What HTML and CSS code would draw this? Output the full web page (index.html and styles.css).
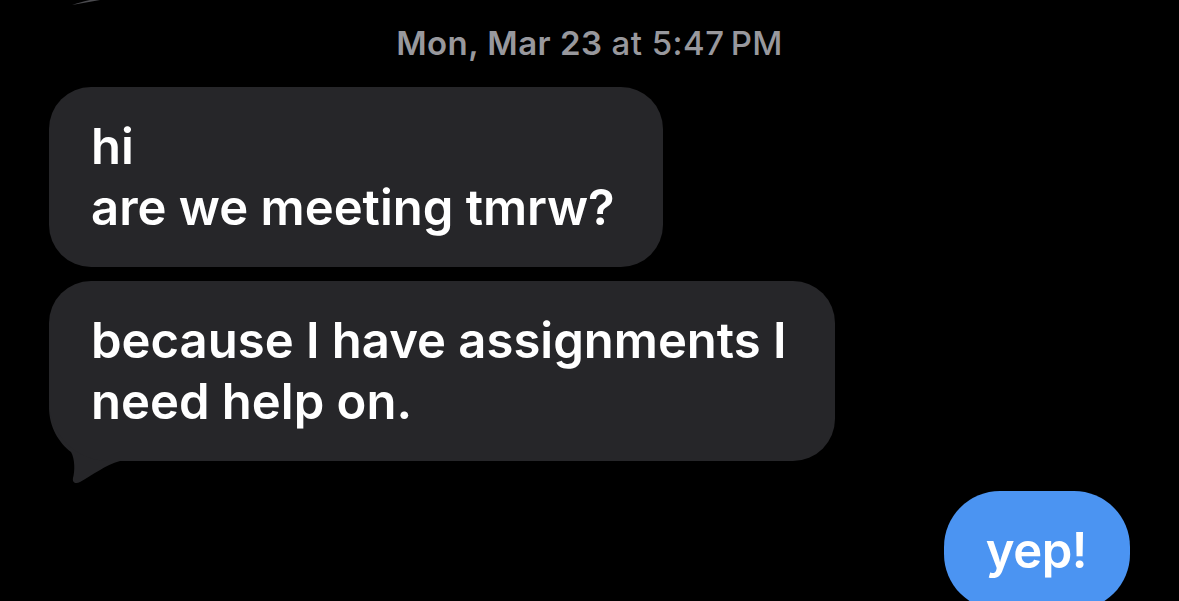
FILE: index.html
```html
<!DOCTYPE html>
<html lang="en">
<head>
    <meta charset="UTF-8">
    <title>Messages</title>
    <link rel="stylesheet" href="styles.css">
</head>
<body>
<div class="thread">
    <!-- tail of the previous message, cut off by the top edge -->
    <svg class="prev-tail" width="30" height="6" viewBox="0 0 30 6"><path d="M2 5 C8 3 14 1 20 0 L30 0 Z" fill="#4a4a4e"/></svg>

    <div class="stamp"><b>Mon, Mar 23</b> at 5:47&#8239;PM</div>

    <div class="msg in">
        <div class="bubble">hi<br>are we meeting tmrw?</div>
    </div>
    <div class="msg in last">
        <div class="bubble">because I have assignments I<br>need help on.</div>
        <svg class="tail" width="100" height="85" viewBox="0 0 100 85"><path d="M0 0 L0 6 C0 26 10 42 22 51 C26 58 26 70 24 77 C23 82 27 83 31 81 C44 74 56 64 71 60 L100 60 L100 0 Z" fill="#262629"/></svg>
    </div>

    <div class="msg out">
        <div class="bubble">yep!</div>
    </div>
</div>
</body>
</html>
```

FILE: styles.css
```css
body,div{margin:0;padding:0;}
body{background:#000;font-family:Inter,"Noto Sans",sans-serif;color:#fff;overflow:hidden;}
.thread{position:relative;height:601px;padding:0 49px;}
.prev-tail{position:absolute;left:70px;top:0;}
.stamp{text-align:center;padding-top:25px;height:87px;box-sizing:border-box;font-size:33px;line-height:36px;font-weight:500;color:#98989d;letter-spacing:0.45px;}
.stamp b{font-weight:600;}
.msg{display:flex;position:relative;}
.msg.in{justify-content:flex-start;margin-bottom:14px;}
.msg.out{justify-content:flex-end;margin-top:30px;}
.bubble{position:relative;z-index:1;font-size:49px;line-height:61px;font-weight:600;padding:29px 48px 29px 42px;border-radius:42px;background:#262629;}
.last .bubble{border-bottom-left-radius:60px;}
.out .bubble{background:#4b94f2;padding:29px 43px 29px 42px;border-radius:56px;letter-spacing:-0.5px;}
.tail{position:absolute;left:0;top:120px;}
```
